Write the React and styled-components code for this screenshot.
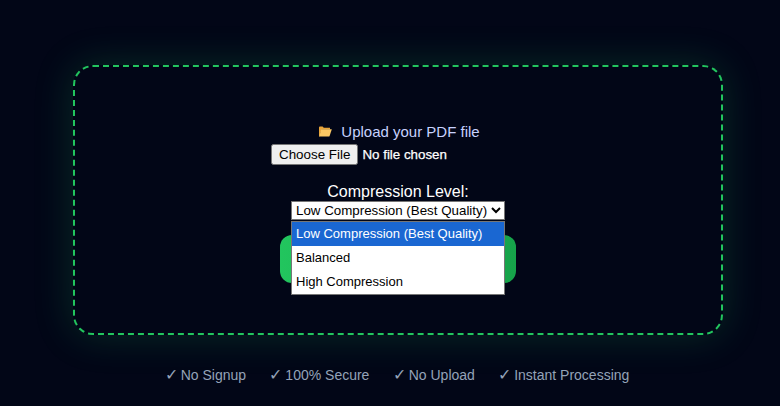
import React from 'react';
import styled, { createGlobalStyle } from 'styled-components';

const Global = createGlobalStyle`
	html, body {
		margin: 0;
		padding: 0;
		background: #020617;
		font-family: "Liberation Sans", Arial, sans-serif;
	}
`;
const Page = styled.div`
	width: 780px;
	height: 406px;
	overflow: hidden;
	box-sizing: border-box;
	padding: 65px 57px 0 73px;
	background: #020617;
`;
const DropZone = styled.div`
	box-sizing: border-box;
	height: 270px;
	padding-top: 55px;
	border: 2px dashed #22c55e;
	border-radius: 20px;
	background: #020617;
	box-shadow: 0 0 40px rgba(34, 197, 94, 0.2);
	display: flex;
	flex-direction: column;
	align-items: center;
`;
const UploadLabel = styled.label`
	display: flex;
	align-items: center;
	gap: 9px;
	height: 18px;
	margin-left: 2px;
	font-size: 15px;
	color: #c7d2fe;
`;
const FileRow = styled.div`
	margin-top: 4px;
	width: 254px;
	display: flex;
	align-items: center;
	height: 20px;
`;
const FileInput = styled.input`
	width: 254px;
	font-family: "Liberation Sans", Arial, sans-serif;
	font-size: 13.33px;
	color: #fff;
	-webkit-text-stroke: 0.25px #fff;
	&::file-selector-button {
		font-family: "Liberation Sans", Arial, sans-serif;
		font-size: 13.4px;
		-webkit-text-stroke: 0;
		margin-right: 4px;
	}
`;
const LevelLabel = styled.div`
	margin-top: 20px;
	height: 16px;
	line-height: 16px;
	font-size: 16px;
	color: #fff;
`;
const SelectWrap = styled.div`
	position: relative;
	margin-top: 1px;
	width: 214px;
	display: flex;
	flex-direction: column;
	align-items: center;
`;
const LevelSelect = styled.select`
	width: 214px;
	height: 19px;
	padding: 0;
	font-family: "Liberation Sans", Arial, sans-serif;
	font-size: 13.33px;
	background: #fff;
	color: #000;
	border: 1px solid #767676;
	border-radius: 0;
`;
const OptionList = styled.ul`
	position: absolute;
	z-index: 2;
	top: 20px;
	left: 0;
	width: 214px;
	box-sizing: border-box;
	margin: 0;
	padding: 0;
	list-style: none;
	background: #fff;
	border: 1px solid #767676;
`;
const OptionItem = styled.li`
	height: 24px;
	line-height: 24px;
	padding-left: 4px;
	font-size: 13px;
	color: ${(p) => (p.$active ? '#fff' : '#000')};
	background: ${(p) => (p.$active ? '#1a67d2' : '#fff')};
`;
const CompressButton = styled.button`
	flex: none;
	margin-top: 15px;
	width: 236px;
	height: 48px;
	border: 0;
	border-radius: 12px;
	background: linear-gradient(90deg, #22c55e, #16a34a);
`;
const Features = styled.div`
	margin-top: 31px;
	margin-left: -2px;
	display: flex;
	justify-content: center;
	gap: 23.3px;
	font-size: 14px;
	color: #94a3b8;
	line-height: 18px;
`;
const Feature = styled.span`
	display: flex;
	gap: 4px;
`;
const CheckMark = styled.span`
	width: 12px;
	font-size: 16px;
`;

const options = ['Low Compression (Best Quality)', 'Balanced', 'High Compression'];
const features = ['No Signup', '100% Secure', 'No Upload', 'Instant Processing'];

function FolderIcon() {
	return (
		<svg width="14" height="11" viewBox="0 0 14 11">
			<path d="M1 1.4 C1 0.8 1.3 0.5 1.9 0.5 H4.6 L5.8 1.7 H12 V3.5 H3.5 L1.6 10.5 H1 Z" fill="#e8a43a" />
			<path d="M3.2 3.2 H13.8 L11.6 10 C11.4 10.5 11.2 10.5 10.8 10.5 H1.2 Z" fill="#fcc964" />
		</svg>
	);
}

export default function App() {
	return (
		<>
			<Global />
			<Page>
				<DropZone>
					<UploadLabel>
						<FolderIcon />
						Upload your PDF file
					</UploadLabel>
					<FileRow>
						<FileInput type="file" />
					</FileRow>
					<LevelLabel>Compression Level:</LevelLabel>
					<SelectWrap>
						<LevelSelect defaultValue={options[0]}>
							{options.map((o) => (
								<option key={o}>{o}</option>
							))}
						</LevelSelect>
						<OptionList>
							{options.map((o, i) => (
								<OptionItem key={o} $active={i === 0}>
									{o}
								</OptionItem>
							))}
						</OptionList>
						<CompressButton />
					</SelectWrap>
				</DropZone>
				<Features>
					{features.map((f) => (
						<Feature key={f}>
							<CheckMark>✓</CheckMark>
							{f}
						</Feature>
					))}
				</Features>
			</Page>
		</>
	);
}
